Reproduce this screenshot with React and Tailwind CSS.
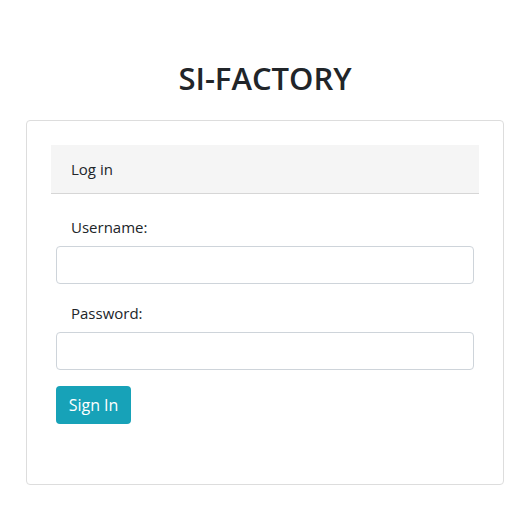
export default function App() {
  return (
    <div className="min-h-[515px] w-[530px] bg-white text-[#212529]" style={{ fontFamily: '"Open Sans", "Noto Sans", sans-serif' }}>
      <div className="pt-[58px] pb-[22px] text-center">
        <h1 className="text-[31px] leading-[40px] font-semibold">SI-FACTORY</h1>
      </div>
      <div className="mx-[26px] h-[365px] rounded border border-[#dddddd] px-[24px] pt-[24px]">
        <div className="h-[49px] bg-[#f5f5f5] border-b border-[#d6d6d6] pl-[20px] flex items-center text-[15px]">Log in</div>
        <div className="px-[5px] pt-[21px]">
          <label className="block pl-[15px] text-[15px] leading-[24px] mb-[7px]">Username:</label>
          <input className="block w-full h-[38px] rounded border border-[#ced4da] bg-white" />
          <label className="block pl-[15px] text-[15px] leading-[24px] mt-[17px] mb-[7px]">Password:</label>
          <input type="password" className="block w-full h-[38px] rounded border border-[#ced4da] bg-white" />
          <button className="mt-[16px] h-[38px] w-[75px] rounded bg-[#17a2b8] text-white text-[16px]">Sign In</button>
        </div>
      </div>
    </div>
  );
}
